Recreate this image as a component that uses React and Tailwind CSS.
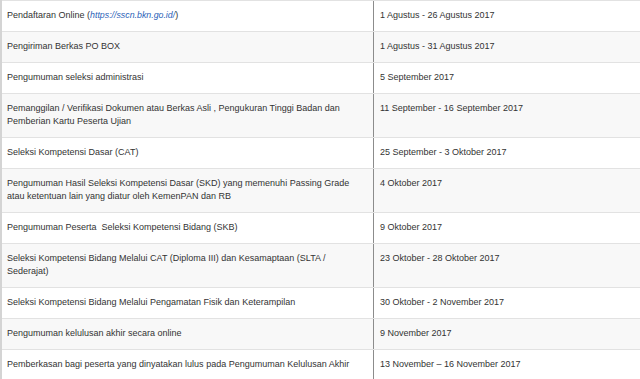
const rows = [
  {
    label: (
      <>
        Pendaftaran Online (
        <span className="italic text-[8.8px] text-[#2b63b8]">https://sscn.bkn.go.id/</span>)
      </>
    ),
    date: "1 Agustus - 26 Agustus 2017",
  },
  { label: "Pengiriman Berkas PO BOX", date: "1 Agustus - 31 Agustus 2017" },
  { label: "Pengumuman seleksi administrasi", date: "5 September 2017" },
  {
    label: (
      <>
        Pemanggilan / Verifikasi Dokumen atau Berkas Asli , Pengukuran Tinggi Badan dan
        <br />
        Pemberian Kartu Peserta Ujian
      </>
    ),
    date: "11 September - 16 September 2017",
  },
  { label: "Seleksi Kompetensi Dasar (CAT)", date: "25 September - 3 Oktober 2017" },
  {
    label: (
      <>
        Pengumuman Hasil Seleksi Kompetensi Dasar (SKD) yang memenuhi Passing Grade
        <br />
        atau ketentuan lain yang diatur oleh KemenPAN dan RB
      </>
    ),
    date: "4 Oktober 2017",
  },
  {
    label: "Pengumuman Peserta\u00a0 Seleksi Kompetensi Bidang (SKB)",
    date: "9 Oktober 2017",
  },
  {
    label: (
      <>
        Seleksi Kompetensi Bidang Melalui CAT (Diploma III) dan Kesamaptaan (SLTA /
        <br />
        Sederajat)
      </>
    ),
    date: "23 Oktober - 28 Oktober 2017",
  },
  {
    label: "Seleksi Kompetensi Bidang Melalui Pengamatan Fisik dan Keterampilan",
    date: "30 Oktober - 2 November 2017",
  },
  { label: "Pengumuman kelulusan akhir secara online", date: "9 November 2017" },
  {
    label: "Pemberkasan bagi peserta yang dinyatakan lulus pada Pengumuman Kelulusan Akhir",
    date: "13 November \u2013 16 November 2017",
  },
];

export default function App() {
  return (
    <div className="w-[640px] h-[379px] overflow-hidden bg-white border-l-2 border-[#d4d4d4] font-['Liberation_Sans',Arial,sans-serif] text-[9px] leading-[13px] text-[#333]">
      {rows.map((r, i) => (
        <div
          key={i}
          className={`flex border-t border-[#e2e2e2] ${i % 2 ? "bg-[#f8f8f8]" : "bg-white"}`}
        >
          <div className="w-[372px] shrink-0 pl-[5px] pt-2 pb-[9px] border-r border-[#8c8c8c] whitespace-nowrap overflow-hidden">
            {r.label}
          </div>
          <div className="flex-1 pl-[6px] pt-2 pb-[9px]">{r.date}</div>
        </div>
      ))}
    </div>
  );
}
